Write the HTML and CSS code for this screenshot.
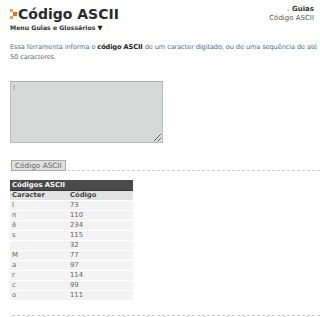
FILE: index.html
```html
<!DOCTYPE html>
<html lang="pt">
<head>
<meta charset="utf-8">
<title>Código ASCII</title>
<link rel="stylesheet" href="styles.css">
</head>
<body>
<div class="page">
  <header class="top">
    <div class="brand">
      <h1 class="title"><span class="logo"><i></i><i></i><i></i></span>Código ASCII</h1>
      <div class="menu">Menu Guias e Glossários <span class="arrow">▼</span></div>
    </div>
    <div class="crumbs">
      <div><span class="dot">.</span> <b>Guias</b></div>
      <div>Código ASCII</div>
    </div>
  </header>
  <p class="intro">Essa ferramenta informa o <b>código ASCII</b> de um caracter <span class="hl">digitado</span>, ou de uma sequência de até 50 caracteres.</p>
  <textarea class="input">I</textarea>
  <div class="actions">
    <button class="btn">Código ASCII</button>
    <span class="dash"></span>
  </div>
  <table class="codes">
    <thead>
      <tr class="cap"><th colspan="2">Códigos ASCII</th></tr>
      <tr class="cols"><th>Caracter</th><th>Código</th></tr>
    </thead>
    <tbody>
      <tr><td>I</td><td>73</td></tr>
      <tr><td>n</td><td>110</td></tr>
      <tr><td>ê</td><td>234</td></tr>
      <tr><td>s</td><td>115</td></tr>
      <tr><td>&nbsp;</td><td>32</td></tr>
      <tr><td>M</td><td>77</td></tr>
      <tr><td>a</td><td>97</td></tr>
      <tr><td>r</td><td>114</td></tr>
      <tr><td>c</td><td>99</td></tr>
      <tr><td>o</td><td>111</td></tr>
    </tbody>
  </table>
  <div class="bottom-dash"></div>
</div>
</body>
</html>
```
FILE: styles.css
```css
html, body { margin: 0; padding: 0; background: #fff; }
body { font-family: "DejaVu Sans", Verdana, sans-serif; color: #555; font-size: 7px; }
.page { padding: 5px 4px 0 10px; }
.top { display: flex; justify-content: space-between; align-items: flex-start; }
.title { margin: 0; font-size: 14px; line-height: 18px; font-weight: bold; color: #2a2a2a; display: flex; align-items: center; }
.logo { position: relative; width: 8px; height: 10px; margin-right: 0; }
.logo i { position: absolute; width: 3px; height: 3px; background: #f7a03c; }
.logo i:nth-child(1) { left: 0; top: 0; }
.logo i:nth-child(2) { left: 3px; top: 3px; width: 4px; height: 4px; background: #f26b1d; }
.logo i:nth-child(3) { left: 0; top: 7px; }
.menu { font-weight: bold; color: #333; font-size: 6.2px; line-height: 8px; margin-top: 1px; }
.arrow { font-size: 6.5px; color: #222; }
.crumbs { text-align: right; font-size: 7px; line-height: 9px; color: #555; margin-right: 2px; }
.crumbs b { color: #333; }
.dot { color: #f7931e; font-weight: bold; }
.intro { margin: 10px 0 0 0; line-height: 10px; color: #5a6a78; font-size: 6.6px; letter-spacing: -0.1px; width: 308px; }
.intro b { color: #222; }
.hl { color: #3a6a9a; }
.input { display: block; margin-top: 19px; width: 153px; height: 62px; box-sizing: border-box; background: #d5d9d7; border: 1px solid #b9bdbb; border-top-color: #a7aba9; padding: 2px; font-size: 7px; color: #888; resize: both; font-family: inherit; }
.actions { display: flex; align-items: flex-end; margin-top: 17px; height: 11px; }
.btn { font-family: inherit; font-size: 7.3px; color: #666; background: #e0e0e0; border: 1px solid #aaa; border-radius: 0; height: 11px; padding: 0 3px; line-height: 9px; margin-left: 1px; }
.dash { flex: 1; border-bottom: 1px dashed #ccc; margin-left: 1px; margin-right: -4px; }
.codes { margin-top: 9px; border-collapse: collapse; width: 123px; font-size: 6.8px; }
.codes th, .codes td { text-align: left; padding: 0 2px; height: 9px; line-height: 9px; }
.cap th { background: #4a4a4a; color: #fff; font-weight: bold; height: 10px; border-bottom: 1px solid #333; }
.cols th { background: #e3e3e3; color: #444; font-weight: bold; }
.cols th:first-child, .codes td:first-child { width: 54px; }
.codes td { background: #f3f3f3; border-top: 1px solid #fff; color: #666; }
.bottom-dash { margin-top: 15px; border-bottom: 1px dashed #ccc; margin-left: 2px; margin-right: -4px; }
```
